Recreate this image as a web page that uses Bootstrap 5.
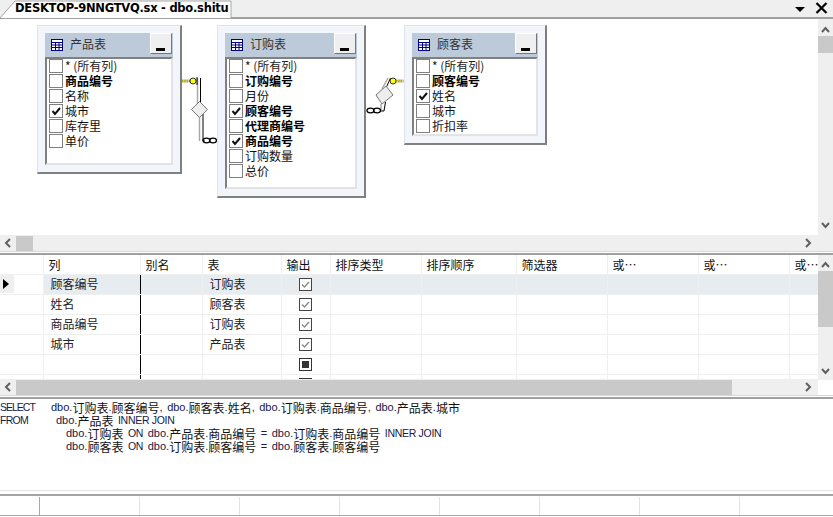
<!DOCTYPE html>
<html lang="zh">
<head>
<meta charset="utf-8">
<title>dbo.shitu</title>
<link href="https://cdn.jsdelivr.net/npm/bootstrap@5.3.0/dist/css/bootstrap.min.css" rel="stylesheet">
<style>
html,body{height:517px;overflow:hidden;background:#fff;}
body{font:12px/15px "Noto Sans CJK SC","Liberation Sans",sans-serif;color:#111;}
.tabbar{height:19px;background:#efefef;border-bottom:2px solid #a0a0a0;}
.tabsvg{left:0;top:0;}
.tabname{font:bold 11.5px/17px "DejaVu Sans","Liberation Sans",sans-serif;letter-spacing:-.25px;color:#000;margin-left:15px;white-space:nowrap;z-index:1;}
.ctrl{margin-right:5px;gap:10px;}
.pane-top{height:232px;}
.canvas{overflow:hidden;background:#fff;}
.wire{left:0;top:0;}
.tblnode{position:absolute;top:6px;background:#f2f6fb;border:1px solid #dfe3e8;border-right:2px solid #808080;border-bottom:2px solid #808080;padding:7px;}
.nodehead{height:24px;background:#bccad9;gap:7px;padding-left:6px;color:#333;font-size:12px;line-height:20px;}
.nodetitle{align-self:flex-start;margin-top:1px;}
.minbtn{width:22px;height:21px;margin-left:auto;margin-right:1px;align-self:flex-start;background:#efefef;border-right:1px solid #777;border-bottom:1px solid #777;border-top:1px solid #fff;border-left:1px solid #fff;position:relative;}
.minbtn::after{content:"";position:absolute;left:5px;bottom:2px;width:9px;height:3px;background:#000;}
.collist{border-top:2px solid #808080;border-left:2px solid #808080;border-right:2px solid #e3e3e3;border-bottom:2px solid #e3e3e3;background:#fff;padding:0 0 0 2px;}
.colrow{height:15px;gap:2px;white-space:nowrap;}
.colrow>span:last-child{line-height:13px;height:13px;}
.cbox{width:14px;height:14px;border:1px solid #808080;background:#fff;flex:none;}
.star{color:#222;}
.pk{font-weight:700;color:#000;}
.vbar{width:15px;background:#efefef;flex:none;}
.hbar{height:16px;background:#efefef;flex:none;}
.arrow{color:#606060;flex:none;}
.thumb{background:#c9c9c9;flex:none;}
.sash{height:4px;background:#fff;border-top:1px solid #d8d8d8;border-bottom:2px solid #a0a0a0;}
.gridpane{height:140px;}
.gridclip{height:125px;overflow:hidden;}
.qgrid{table-layout:fixed;border-collapse:collapse;width:818px;margin:0;}
.qgrid th,.qgrid td{height:20px;padding:0 0 0 7px;border:1px solid #efefef;font-weight:400;line-height:18px;white-space:nowrap;overflow:hidden;vertical-align:middle;color:#222;}
.qgrid th{padding-left:5px;padding-top:1px;line-height:17px;border-top:0;height:19px;color:#111;}
.qgrid tr>*:first-child{border-left:0;padding:0;}
.qgrid .rowcur td{background:#e7ecf1;}
.qgrid .rowcur td:first-child{background:#fff;border:0;border-top:1px dotted #000;border-bottom:1px dotted #000;border-right:1px dotted #000;}
.curmark{width:14px;height:18px;background:#efefef;display:flex;align-items:center;padding-left:3px;}
.blackline{border-right:1px solid #000 !important;}
.gcheck{display:block;margin:0 auto;}
.qgrid td.chk{padding:0;}
.sqlpane{height:91px;color:#15204a;padding-top:2px;}
.sqlline{height:13px;white-space:nowrap;font:11px/13px "Liberation Sans","Noto Sans CJK SC",sans-serif;word-spacing:1.5px;}
.sqlkw{display:inline-block;font-size:10.5px;word-spacing:0;}
.sel{letter-spacing:-1px;}
.frm{letter-spacing:-.7px;}
.w51{width:51px;}
.w56{width:56px;}
.w66{width:66px;}
.cn{display:inline-block;height:13px;font:12px/13px "Noto Sans CJK SC",sans-serif;color:#111;vertical-align:top;}
.up{font-size:10.5px;letter-spacing:-.3px;word-spacing:0;}
.lowsash{height:6px;background:#fff;border-top:1px solid #e0e0e0;border-bottom:2px solid #a4a4a4;}
.statusbar{height:20px;border-bottom:1px solid #a8a8a8;background:#fff;padding-top:1px;}
.statcell{height:100%;border-right:1px solid #e2e2e2;flex:none;width:100px;}
.statcell.first{width:40px;border-right:1px solid #a8a8a8;}
</style>
</head>
<body>
<div class="tabbar d-flex align-items-start position-relative">
  <svg class="tabsvg position-absolute" width="240" height="19"><path d="M0 18 L15 1 H231 V18" fill="#fff" stroke="#a8a8a8"/></svg>
  <div class="tabname position-relative">DESKTOP-9NNGTVQ.sx - dbo.shitu</div>
  <div class="ms-auto d-flex align-items-center ctrl">
    <svg width="10" height="18"><path d="M0 7 H10 L5 12Z" fill="#000"/></svg>
    <svg width="13" height="18"><path d="M1.500 3 L11.500 13 M11.500 3 L1.500 13" stroke="#000" stroke-width="2.200"/></svg>
  </div>
</div>

<div class="pane-top d-flex">
  <div class="d-flex flex-column flex-grow-1">
    <div class="canvas flex-grow-1 position-relative">
      <svg class="wire position-absolute" width="818" height="216">
        <!-- relation 1 -->
        <path d="M197.500 59 V91 M199.500 91 V122" stroke="#aaa" stroke-width="1.500" fill="none"/>
        <path d="M200.500 59 V88 M203 92 V122 H205" stroke="#000" fill="none"/>
        <path d="M199.500 82.500 L207.500 90.500 L199.500 98.500 L191.500 90.500 Z" fill="#eee" stroke="#777"/>
        <path d="M182 62 H190" stroke="#a89a10" stroke-width="3" stroke-dasharray="1.500 .7"/>
        <circle cx="193" cy="62" r="3" fill="#ff0" stroke="#333"/>
        <path d="M197 58 V66" stroke="#000"/>
        <g fill="none" stroke="#000" stroke-width="1.300"><ellipse cx="206.500" cy="121.500" rx="3.500" ry="2.300"/><ellipse cx="213" cy="121.500" rx="3.500" ry="2.300"/></g>
        <!-- relation 2 -->
        <path d="M388 59 L382 70 M381 85 V91" stroke="#aaa" stroke-width="1.500" fill="none"/>
        <path d="M390.500 59 L386 69 M385.500 83 L384 92 H381" stroke="#000" fill="none"/>
        <path d="M386 67 L393 76 L382 85 L376 76 Z" fill="#eee" stroke="#777"/>
        <circle cx="393" cy="62" r="3" fill="#ff0" stroke="#333"/>
        <path d="M396 62 H403.500" stroke="#a89a10" stroke-width="3" stroke-dasharray="1.500 .7"/>
        <g fill="none" stroke="#000" stroke-width="1.300"><ellipse cx="370.500" cy="91.500" rx="3.500" ry="2.300"/><ellipse cx="377" cy="91.500" rx="3.500" ry="2.300"/></g>
      </svg>

      <div class="tblnode" style="left:37px;width:145px">
        <div class="nodehead d-flex align-items-center">
          <svg width="12" height="12"><rect x=".5" y=".5" width="11" height="11" fill="#fff" stroke="#000080"/><path d="M1 3.500H11M1 6H11M1 8.500H11M4.500 3V11M8 3V11" stroke="#000080" stroke-width="1"/></svg>
          <span class="nodetitle">产品表</span><span class="minbtn"></span>
        </div>
        <div class="collist" style="height:108px">
          <div class="colrow d-flex"><span class="cbox"></span><span class="star">* (所有列)</span></div>
          <div class="colrow d-flex"><span class="cbox"></span><span class="pk">商品编号</span></div>
          <div class="colrow d-flex"><span class="cbox"></span><span>名称</span></div>
          <div class="colrow d-flex"><span class="cbox"><svg width="12" height="12" class="d-block"><path d="M2.500 6 L5 9 L10 3" stroke="#111" stroke-width="2" fill="none"/></svg></span><span>城市</span></div>
          <div class="colrow d-flex"><span class="cbox"></span><span>库存里</span></div>
          <div class="colrow d-flex"><span class="cbox"></span><span>单价</span></div>
        </div>
      </div>

      <div class="tblnode" style="left:217px;width:149px">
        <div class="nodehead d-flex align-items-center">
          <svg width="12" height="12"><rect x=".5" y=".5" width="11" height="11" fill="#fff" stroke="#000080"/><path d="M1 3.500H11M1 6H11M1 8.500H11M4.500 3V11M8 3V11" stroke="#000080" stroke-width="1"/></svg>
          <span class="nodetitle">订购表</span><span class="minbtn"></span>
        </div>
        <div class="collist" style="height:132px">
          <div class="colrow d-flex"><span class="cbox"></span><span class="star">* (所有列)</span></div>
          <div class="colrow d-flex"><span class="cbox"></span><span class="pk">订购编号</span></div>
          <div class="colrow d-flex"><span class="cbox"></span><span>月份</span></div>
          <div class="colrow d-flex"><span class="cbox"><svg width="12" height="12" class="d-block"><path d="M2.500 6 L5 9 L10 3" stroke="#111" stroke-width="2" fill="none"/></svg></span><span class="pk">顾客编号</span></div>
          <div class="colrow d-flex"><span class="cbox"></span><span class="pk">代理商编号</span></div>
          <div class="colrow d-flex"><span class="cbox"><svg width="12" height="12" class="d-block"><path d="M2.500 6 L5 9 L10 3" stroke="#111" stroke-width="2" fill="none"/></svg></span><span class="pk">商品编号</span></div>
          <div class="colrow d-flex"><span class="cbox"></span><span>订购数量</span></div>
          <div class="colrow d-flex"><span class="cbox"></span><span>总价</span></div>
        </div>
      </div>

      <div class="tblnode" style="left:404px;width:143px">
        <div class="nodehead d-flex align-items-center">
          <svg width="12" height="12"><rect x=".5" y=".5" width="11" height="11" fill="#fff" stroke="#000080"/><path d="M1 3.500H11M1 6H11M1 8.500H11M4.500 3V11M8 3V11" stroke="#000080" stroke-width="1"/></svg>
          <span class="nodetitle">顾客表</span><span class="minbtn"></span>
        </div>
        <div class="collist" style="height:79px">
          <div class="colrow d-flex"><span class="cbox"></span><span class="star">* (所有列)</span></div>
          <div class="colrow d-flex"><span class="cbox"></span><span class="pk">顾客编号</span></div>
          <div class="colrow d-flex"><span class="cbox"><svg width="12" height="12" class="d-block"><path d="M2.500 6 L5 9 L10 3" stroke="#111" stroke-width="2" fill="none"/></svg></span><span>姓名</span></div>
          <div class="colrow d-flex"><span class="cbox"></span><span>城市</span></div>
          <div class="colrow d-flex"><span class="cbox"></span><span>折扣率</span></div>
        </div>
      </div>
    </div>
    <div class="hbar d-flex align-items-center">
      <svg class="arrow mx-1" width="8" height="16"><path d="M6 4 L2 8 L6 12" stroke="#606060" stroke-width="2" fill="none"/></svg>
      <div class="thumb" style="width:17px;height:15px"></div>
      <svg class="arrow ms-auto" style="margin-right:6px" width="8" height="16"><path d="M2 4 L6 8 L2 12" stroke="#606060" stroke-width="2" fill="none"/></svg>
    </div>
  </div>
  <div class="vbar d-flex flex-column align-items-center">
    <svg class="arrow" style="margin-top:5px" width="15" height="12"><path d="M4 8 L7.500 4 L11 8" stroke="#606060" stroke-width="2" fill="none"/></svg>
    <div class="thumb w-100" style="height:17px"></div>
    <svg class="arrow mt-auto" style="margin-bottom:20px" width="15" height="12"><path d="M4 4 L7.500 8 L11 4" stroke="#606060" stroke-width="2" fill="none"/></svg>
  </div>
</div>

<div class="sash"></div>

<div class="gridpane d-flex">
  <div class="flex-grow-1 d-flex flex-column" style="min-width:0">
    <div class="gridclip">
      <table class="qgrid">
        <colgroup><col style="width:43px"><col style="width:97px"><col style="width:62px"><col style="width:79px"><col style="width:49px"><col style="width:91px"><col style="width:95px"><col style="width:91px"><col style="width:91px"><col style="width:91px"><col style="width:29px"></colgroup>
        <thead><tr><th></th><th>列</th><th>别名</th><th>表</th><th>输出</th><th>排序类型</th><th>排序顺序</th><th>筛选器</th><th>或…</th><th>或…</th><th>或…</th></tr></thead>
        <tbody>
          <tr class="rowcur"><td><span class="curmark"><svg width="6" height="10"><path d="M0 0 L6 5 L0 10Z" fill="#000"/></svg></span></td><td class="blackline">顾客编号</td><td></td><td>订购表</td><td class="chk"><svg class="gcheck" width="13" height="13"><rect x=".5" y=".5" width="12" height="12" fill="#fff" stroke="#444"/><path d="M3 6.500 L5.500 9 L10 4" stroke="#888" stroke-width="1.300" fill="none"/></svg></td><td></td><td></td><td></td><td></td><td></td><td></td></tr>
          <tr><td></td><td class="blackline">姓名</td><td></td><td>顾客表</td><td class="chk"><svg class="gcheck" width="13" height="13"><rect x=".5" y=".5" width="12" height="12" fill="#fff" stroke="#444"/><path d="M3 6.500 L5.500 9 L10 4" stroke="#888" stroke-width="1.300" fill="none"/></svg></td><td></td><td></td><td></td><td></td><td></td><td></td></tr>
          <tr><td></td><td class="blackline">商品编号</td><td></td><td>订购表</td><td class="chk"><svg class="gcheck" width="13" height="13"><rect x=".5" y=".5" width="12" height="12" fill="#fff" stroke="#444"/><path d="M3 6.500 L5.500 9 L10 4" stroke="#888" stroke-width="1.300" fill="none"/></svg></td><td></td><td></td><td></td><td></td><td></td><td></td></tr>
          <tr><td></td><td class="blackline">城市</td><td></td><td>产品表</td><td class="chk"><svg class="gcheck" width="13" height="13"><rect x=".5" y=".5" width="12" height="12" fill="#fff" stroke="#444"/><path d="M3 6.500 L5.500 9 L10 4" stroke="#888" stroke-width="1.300" fill="none"/></svg></td><td></td><td></td><td></td><td></td><td></td><td></td></tr>
          <tr><td></td><td class="blackline"></td><td></td><td></td><td class="chk"><svg class="gcheck" width="13" height="13"><rect x=".5" y=".5" width="12" height="12" fill="#fff" stroke="#333"/><rect x="3" y="3" width="7" height="7" fill="#333"/></svg></td><td></td><td></td><td></td><td></td><td></td><td></td></tr>
          <tr><td></td><td class="blackline"></td><td></td><td></td><td class="chk"><svg class="gcheck" width="13" height="13"><rect x=".5" y=".5" width="12" height="12" fill="#fff" stroke="#333"/><rect x="3" y="3" width="7" height="7" fill="#333"/></svg></td><td></td><td></td><td></td><td></td><td></td><td></td></tr>
        </tbody>
      </table>
    </div>
    <div class="hbar d-flex align-items-center">
      <svg class="arrow mx-1" width="8" height="16"><path d="M6 4 L2 8 L6 12" stroke="#606060" stroke-width="2" fill="none"/></svg>
      <div class="thumb" style="width:716px;height:15px"></div>
      <svg class="arrow ms-auto" style="margin-right:6px" width="8" height="16"><path d="M2 4 L6 8 L2 12" stroke="#606060" stroke-width="2" fill="none"/></svg>
    </div>
  </div>
  <div class="vbar d-flex flex-column align-items-center" style="height:125px">
    <svg class="arrow" style="margin-top:4px" width="15" height="12"><path d="M4 8 L7.500 4 L11 8" stroke="#606060" stroke-width="2" fill="none"/></svg>
    <div class="thumb w-100" style="height:56px"></div>
    <svg class="arrow mt-auto" style="margin-bottom:3px" width="15" height="12"><path d="M4 4 L7.500 8 L11 4" stroke="#606060" stroke-width="2" fill="none"/></svg>
  </div>
</div>

<div class="sash"></div>

<div class="sqlpane">
  <div class="sqlline"><span class="sqlkw sel w51">SELECT</span>dbo.<span class="cn">订购表</span>.<span class="cn">顾客编号</span>, dbo.<span class="cn">顾客表</span>.<span class="cn">姓名</span>, dbo.<span class="cn">订购表</span>.<span class="cn">商品编号</span>, dbo.<span class="cn">产品表</span>.<span class="cn">城市</span></div>
  <div class="sqlline"><span class="sqlkw frm w56">FROM</span>dbo.<span class="cn">产品表</span> <span class="up">INNER JOIN</span></div>
  <div class="sqlline"><span class="sqlkw w66"></span>dbo.<span class="cn">订购表</span> <span class="up">ON</span> dbo.<span class="cn">产品表</span>.<span class="cn">商品编号</span> = dbo.<span class="cn">订购表</span>.<span class="cn">商品编号</span> <span class="up">INNER JOIN</span></div>
  <div class="sqlline"><span class="sqlkw w66"></span>dbo.<span class="cn">顾客表</span> <span class="up">ON</span> dbo.<span class="cn">订购表</span>.<span class="cn">顾客编号</span> = dbo.<span class="cn">顾客表</span>.<span class="cn">顾客编号</span></div>
</div>

<div class="lowsash"></div>
<div class="statusbar d-flex">
  <div class="statcell first"></div><div class="statcell"></div><div class="statcell"></div><div class="statcell"></div><div class="statcell"></div><div class="statcell"></div><div class="statcell"></div><div class="statcell"></div><div class="statcell"></div>
</div>
<script src="https://cdn.jsdelivr.net/npm/bootstrap@5.3.0/dist/js/bootstrap.bundle.min.js"></script>
</body>
</html>
